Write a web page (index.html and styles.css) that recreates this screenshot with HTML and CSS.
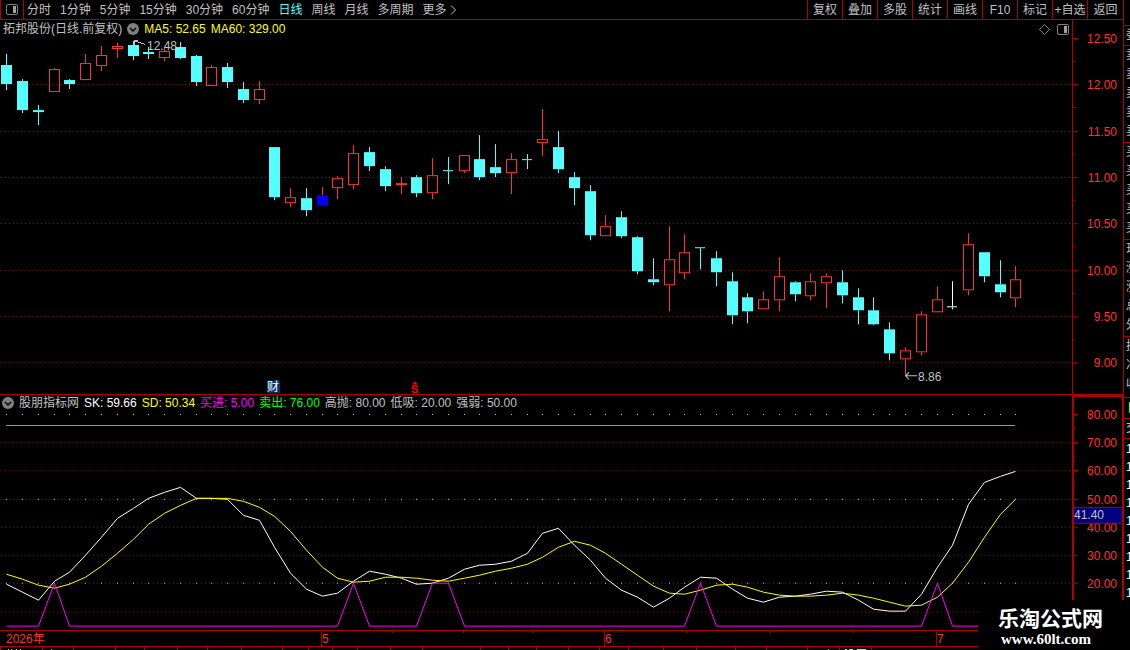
FILE: index.html
```html
<!DOCTYPE html>
<html lang="zh-CN">
<head>
  <meta charset="UTF-8">
  <meta name="viewport" content="width=device-width, initial-scale=1.0">
  <title>拓邦股份 日线</title>
  <link rel="stylesheet" href="styles.css">
</head>
<body>

  <div class="terminal">
    <nav class="toolbar">
      <button class="layout-btn" aria-label="布局">
        <svg width="12" height="11" viewBox="0 0 12 11"><rect x="0.5" y="0.5" width="11" height="10" rx="1.5" fill="none" stroke="#808080"/><rect x="7" y="2" width="3" height="7" fill="#a0a0a0"/></svg>
      </button>
      <div class="periods">
        <button>分时</button>
        <button>1分钟</button>
        <button>5分钟</button>
        <button>15分钟</button>
        <button>30分钟</button>
        <button>60分钟</button>
        <button class="active">日线</button>
        <button>周线</button>
        <button>月线</button>
        <button>多周期</button>
        <button class="more">更多
          <svg width="6" height="10" viewBox="0 0 6 10"><path d="M1 0.5 L5.5 5 L1 9.5" fill="none" stroke="#c0c0c0"/></svg>
        </button>
      </div>
      <div class="tools">
        <button>复权</button>
        <button>叠加</button>
        <button>多股</button>
        <button>统计</button>
        <button>画线</button>
        <button>F10</button>
        <button>标记</button>
        <button>+自选</button>
        <button>返回</button>
      </div>
    </nav>

    <section class="panel price">
      <div class="plot">
        <header class="info">
          <span>拓邦股份(日线.前复权)</span>
          <svg class="drop" width="12" height="12" viewBox="0 0 12 12"><circle cx="6" cy="6" r="6" fill="#808080"/><path d="M3 5 L6 8 L9 5" fill="none" stroke="#000" stroke-width="1.5"/></svg>
          <span class="yellow">MA5: 52.65</span>
          <span class="yellow">MA60: 329.00</span>
          <span class="marks">
            <svg width="11" height="11" viewBox="0 0 11 11"><path d="M5.5 0.5 L10.5 5.5 L5.5 10.5 L0.5 5.5 Z" fill="none" stroke="#808080"/></svg>
            <svg width="12" height="11" viewBox="0 0 12 11"><rect x="0.5" y="0.5" width="11" height="10" rx="1.5" fill="none" stroke="#808080"/><rect x="7" y="2" width="3" height="7" fill="#a0a0a0"/></svg>
          </span>
        </header>
        <svg class="canvas" id="candles" viewBox="0 40 1072 354" preserveAspectRatio="none"></svg>
      </div>
      <svg class="axis" id="priceAxis" viewBox="1072 20 51 374" preserveAspectRatio="none"></svg>
    </section>

    <section class="panel indicator">
      <div class="plot">
        <header class="info">
          <svg class="drop" width="12" height="12" viewBox="0 0 12 12"><circle cx="6" cy="6" r="6" fill="#808080"/><path d="M3 5 L6 8 L9 5" fill="none" stroke="#000" stroke-width="1.5"/></svg>
          <span>股朋指标网</span>
          <span class="white">SK: 59.66</span>
          <span class="yellow">SD: 50.34</span>
          <span class="magenta">买进: 5.00</span>
          <span class="green">卖出: 76.00</span>
          <span>高抛: 80.00</span>
          <span>低吸: 20.00</span>
          <span>强弱: 50.00</span>
        </header>
        <svg class="canvas" id="lines" viewBox="0 412 1072 218" preserveAspectRatio="none"></svg>
      </div>
      <svg class="axis" id="indAxis" viewBox="1072 395 51 235" preserveAspectRatio="none"></svg>
    </section>

    <svg class="dates" id="dates" viewBox="0 631 1123 15" preserveAspectRatio="none"></svg>
    <svg class="ticker" id="ticker" viewBox="0 647 1123 3" preserveAspectRatio="none"></svg>
  </div>

  <aside class="quotes">
    <div class="group head"></div>
    <div class="group"><span>委</span></div>
    <div class="group rows"><span>卖</span><span>卖</span><span>卖</span><span>卖</span><span>卖</span></div>
    <div class="group rows"><span>买</span><span>买</span><span>买</span><span>买</span><span>买</span></div>
    <div class="group rows"><span>现</span><span>涨</span><span>涨</span><span>总</span><span>外</span></div>
    <div class="group stats"><span>换</span><span>净</span><span>收</span></div>
    <div class="group tab"><span>日</span></div>
    <div class="group"><span>交</span></div>
    <div class="group ticks"><span>1</span><span>1</span><span>1</span><span>1</span><span>1</span><span>1</span><span>1</span><span>1</span><span>1</span></div>
  </aside>

  <div class="brand">
    <strong>乐淘公式网</strong>
    <a href="#">www.60lt.com</a>
  </div>

  <script src="chart.js"></script>
</body>
</html>
```
FILE: styles.css
```css
* {
  box-sizing: border-box;
}

body {
  margin: 0;
  height: 100vh;
  display: flex;
  overflow: hidden;
  background: #000;
  color: #c0c0c0;
  font-family: "Liberation Sans", "Noto Sans CJK SC", sans-serif;
  font-size: 12px;
  line-height: 18px;
}

button {
  padding: 0;
  border: none;
  background: none;
  color: inherit;
  font: inherit;
  white-space: nowrap;
  cursor: pointer;
}

svg {
  display: block;
}

.terminal {
  flex: 1;
  min-width: 0;
  display: flex;
  flex-direction: column;
}

/* toolbar */
.toolbar {
  height: 20px;
  display: flex;
  border-bottom: 1px solid #b00000;
}

.layout-btn {
  width: 24px;
  display: flex;
  align-items: center;
  justify-content: center;
  border-left: 1px solid #b00000;
  border-right: 1px solid #b00000;
}

.periods {
  flex: 1;
  display: flex;
  gap: 9px;
  padding-left: 3px;
}

.periods .active {
  color: #54ffff;
}

.more {
  display: flex;
  align-items: center;
  gap: 3px;
}

.tools {
  display: flex;
}

.tools button {
  width: 35px;
  border-left: 1px solid #b00000;
}

.tools button:last-child {
  width: 36px;
}

/* chart panels */
.panel {
  display: flex;
  min-height: 0;
}

.price {
  flex: 375 1 0;
  border-bottom: 1px solid #b00000;
}

.indicator {
  flex: 235 1 0;
}

.plot {
  flex: 1;
  min-width: 0;
  display: flex;
  flex-direction: column;
}

.info {
  display: flex;
  align-items: center;
  gap: 5px;
  height: 20px;
  padding: 0 3px 2px;
  white-space: nowrap;
}

.indicator .info {
  height: 17px;
  padding: 0 2px 1px;
}

.marks {
  display: flex;
  gap: 7px;
  margin-left: auto;
}

.canvas {
  flex: 1;
  width: 100%;
  min-height: 0;
}

.axis {
  width: 51px;
  height: 100%;
}

.dates {
  width: 100%;
  height: 16px;
  border-top: 1px solid #b00000;
}

.ticker {
  width: 100%;
  height: 4px;
  border-top: 1px solid #b00000;
}

.yellow { color: #ffff00; }
.white { color: #ffffff; }
.magenta { color: #ff00ff; }
.green { color: #00ff00; }

.label {
  fill: #ff3232;
}

.note {
  fill: #c0c0c0;
}

/* quote strip at the right edge */
.quotes {
  width: 7px;
  overflow: hidden;
  border-left: 1px solid #b00000;
}

.group {
  padding: 0 2px;
  border-bottom: 1px solid #b00000;
}

.group.head {
  height: 26px;
}

.group span {
  display: block;
  height: 19px;
  line-height: 19px;
}

.group.rows {
  padding-bottom: 1px;
}

.group.stats {
  padding-bottom: 3px;
}

.group.tab {
  padding: 1px 3px 0;
  color: #ffff00;
}

.group.ticks {
  padding-top: 1px;
  color: #ffffff;
  border-bottom: none;
}

.group.ticks span {
  height: 18px;
  line-height: 18px;
}

/* site mark over the lower right corner */
.brand {
  position: absolute;
  right: 0;
  bottom: 0;
  width: 152px;
  height: 50px;
  padding: 8px 20px 0;
  background: #000;
  color: #fff;
}

.brand strong {
  display: block;
  font-size: 21px;
  line-height: 22px;
  white-space: nowrap;
}

.brand a {
  display: block;
  padding-left: 3px;
  color: #fff;
  font: bold 15px/18px "Liberation Serif", serif;
  text-decoration: none;
}
```
FILE: chart.js
```js
const RED = "#ff3232";
const CYAN = "#54ffff";
const LINE = "#b00000";

// high, body top, body bottom, low, type (r = up, c = down, b = marked, w = flat)
const candles = [
  [54, 65, 84, 90, "c"], [79, 81, 110, 113, "c"], [105, 110, 112, 125, "c"], [68, 69, 92, 92, "r"],
  [79, 80, 84, 89, "c"], [54, 63, 80, 80, "r"], [46, 55, 66, 71, "r"], [43, 46, 49, 58, "r"],
  [41, 45, 56, 60, "c"], [47, 52, 54, 59, "c"], [48, 51, 58, 61, "r"], [42, 47, 58, 59, "c"],
  [55, 56, 82, 86, "c"], [65, 67, 86, 86, "r"], [63, 67, 82, 88, "c"], [82, 89, 100, 103, "c"],
  [81, 89, 100, 104, "r"], [147, 147, 197, 200, "c"], [188, 197, 203, 207, "r"], [188, 198, 210, 216, "c"],
  [187, 195, 205, 205, "b"], [176, 178, 188, 199, "r"], [145, 153, 185, 189, "r"], [147, 152, 166, 171, "c"],
  [166, 169, 186, 191, "c"], [177, 183, 185, 194, "r"], [175, 177, 193, 197, "c"], [158, 175, 193, 199, "r"],
  [157, 170, 171, 184, "c"], [155, 155, 171, 173, "r"], [135, 159, 177, 180, "c"], [144, 167, 173, 177, "c"],
  [153, 159, 173, 194, "r"], [154, 159, 160, 169, "c"], [109, 139, 143, 156, "r"], [131, 147, 169, 173, "c"],
  [172, 177, 188, 205, "c"], [185, 191, 235, 240, "c"], [215, 226, 236, 236, "r"], [211, 217, 236, 238, "c"],
  [236, 237, 271, 274, "c"], [258, 279, 282, 285, "c"], [226, 259, 285, 311, "r"], [234, 252, 273, 279, "r"],
  [247, 247, 248, 269, "c"], [251, 258, 272, 286, "c"], [272, 281, 315, 324, "c"], [293, 297, 311, 323, "c"],
  [291, 299, 309, 309, "r"], [257, 276, 300, 311, "r"], [281, 282, 294, 301, "c"], [273, 281, 296, 300, "r"],
  [273, 276, 283, 308, "r"], [270, 282, 295, 303, "c"], [288, 297, 310, 324, "c"], [297, 310, 324, 325, "c"],
  [322, 329, 353, 360, "c"], [347, 350, 359, 375, "r"], [311, 314, 352, 355, "r"], [286, 299, 312, 312, "r"],
  [281, 306, 307, 309, "w"], [233, 244, 290, 295, "r"], [252, 252, 276, 282, "c"], [260, 284, 292, 297, "c"],
  [266, 279, 298, 307, "r"]
];

const sk = [584, 592, 600, 581, 572, 555, 537, 518, 508, 498, 492, 487, 498, 498, 499, 515, 520, 547, 573, 589,
  596, 593, 581, 571, 574, 578, 584, 583, 578, 569, 565, 564, 561, 553, 533, 528, 545, 560, 578, 590,
  597, 607, 598, 587, 577, 578, 589, 598, 602, 597, 596, 594, 591, 592, 600, 609, 611, 611, 594, 567,
  545, 504, 482, 476, 471];

const sd = [574, 579, 585, 588, 584, 577, 566, 553, 539, 524, 513, 505, 498, 498, 498, 501, 507, 516, 531, 550,
  567, 578, 582, 581, 577, 577, 578, 580, 581, 578, 575, 571, 568, 564, 557, 547, 541, 545, 553, 564,
  575, 586, 593, 594, 590, 585, 584, 587, 592, 595, 596, 596, 595, 593, 595, 598, 602, 606, 605, 597,
  583, 562, 537, 514, 499];

const buyDays = [3, 22, 27, 28, 44, 59];

function dayX(i) {
  return Math.ceil(5.9 + i * 15.765);
}

function rect(x, y, w, h, fill) {
  return `<rect x="${x}" y="${y}" width="${w}" height="${h}" fill="${fill}"/>`;
}

function text(x, y, str, cls, anchor = "start") {
  return `<text x="${x}" y="${y}" class="${cls}" text-anchor="${anchor}">${str}</text>`;
}

function gridLine(y) {
  return `<path d="M1 ${y + 0.5} H1072" stroke="#a00000" stroke-dasharray="1 3" shape-rendering="crispEdges"/>`;
}

function curve(values, color) {
  const points = values.map((y, i) => `${dayX(i) + 0.5},${y + 0.5}`).join(" ");
  return `<polyline points="${points}" fill="none" stroke="${color}" shape-rendering="crispEdges"/>`;
}

function drawCandle([high, top, bottom, low, type], i) {
  const x = dayX(i);
  const color = { r: RED, c: CYAN, b: "#0000ff", w: "#ffffff" }[type];
  const wick = type === "b" ? RED : color;
  let out = rect(x, high, 1, top - high, wick) + rect(x, bottom, 1, low - bottom, wick);
  if (type === "r" && bottom - top > 2) {
    out += `<rect x="${x - 4.5}" y="${top + 0.5}" width="10" height="${bottom - top - 1}" fill="none" stroke="${color}"/>`;
  } else {
    out += rect(x - 5, top, bottom - top === 1 ? 10 : 11, bottom - top, color);
  }
  return out;
}

function drawPrice() {
  const rows = [38, 84, 131, 177, 223, 270, 316, 362];
  let out = rows.slice(1).map(gridLine).join("");
  out += candles.map(drawCandle).join("");
  out += `<path d="M145 44.5 L134 40.5 M138 40.5 H134 V45" fill="none" stroke="#c0c0c0" shape-rendering="crispEdges"/>`;
  out += text(147, 50, "12.48", "note");
  out += `<path d="M917 375.5 H905 M909 372 L905.5 375.5 L909 379" fill="none" stroke="#c0c0c0"/>`;
  out += text(918, 381, "8.86", "note");
  out += rect(267, 380, 13, 13, "#003366");
  out += `<text x="267" y="391" fill="#ffffff">财</text>`;
  out += `<path d="M415 381 L418 384 H412 Z" fill="#ff0000"/>`;
  out += `<text x="411" y="393" fill="#ff0000" font-size="11" font-weight="bold">S</text>`;
  document.getElementById("candles").innerHTML = out;

  let axis = rect(1072, 20, 1, 374, LINE);
  rows.forEach((y, i) => {
    axis += rect(1073, y, 5, 1, LINE);
    axis += rect(1073, y + 23, 2, 1, i < 7 ? LINE : "none");
    axis += text(1117, y + 5, (12.5 - i * 0.5).toFixed(2), "label", "end");
  });
  document.getElementById("priceAxis").innerHTML = axis;
}

function drawIndicator() {
  let out = [442, 470, 499, 527, 555, 583, 612].map(gridLine).join("");
  [414, 499, 583].forEach(y => {
    candles.forEach((c, i) => out += rect(dayX(i), y, 1, 1, "#c0c0c0"));
  });
  out += rect(6, 425, 1009, 1, "#00ff00");
  out += curve(sk, "#ffffff");
  out += curve(sd, "#ffff00");
  out += curve(candles.map((c, i) => buyDays.includes(i) ? 583 : 626), "#ff00ff");
  document.getElementById("lines").innerHTML = out;

  let axis = rect(1072, 395, 51, 2, LINE) + rect(1072, 395, 2, 235, LINE) + rect(1122, 395, 1, 235, LINE);
  [414, 442, 470, 499, 527, 555, 583].forEach((y, i) => {
    axis += rect(1074, y, 4, 1, LINE) + rect(1074, y + 14, 1, 1, LINE);
    axis += text(1117, y + 5, (80 - i * 10).toFixed(2), "label", "end");
  });
  axis += rect(1074, 507, 48, 17, LINE) + rect(1074, 508, 48, 15, "#000080");
  axis += text(1074, 519, "41.40", "note");
  document.getElementById("indAxis").innerHTML = axis;
}

function drawDates() {
  let out = text(6, 643, "2026年", "label");
  [[321, "5"], [604, "6"], [936, "7"]].forEach(([x, month]) => {
    out += rect(x, 631, 1, 15, LINE) + text(x + 1, 643, month, "label");
  });
  [392, 463, 533, 687, 770, 853].forEach(x => out += rect(x, 631, 1, 2, LINE));
  document.getElementById("dates").innerHTML = out;

  let ticks = "";
  [0, 42, 73, 115, 144, 177, 207, 241, 282, 308, 332, 357, 390, 422, 480, 508, 536, 568, 599, 628,
    663, 696, 735, 766, 807, 839, 871].forEach(x => ticks += rect(x, 647, 1, 3, LINE));
  [8, 11, 16, 20, 51, 828].forEach(x => ticks += rect(x, 649, 1, 1, "#c0c0c0"));
  ticks += rect(845, 649, 2, 1, CYAN) + rect(849, 649, 4, 1, CYAN) + rect(857, 649, 9, 1, CYAN);
  document.getElementById("ticker").innerHTML = ticks;
}

drawPrice();
drawIndicator();
drawDates();
```
